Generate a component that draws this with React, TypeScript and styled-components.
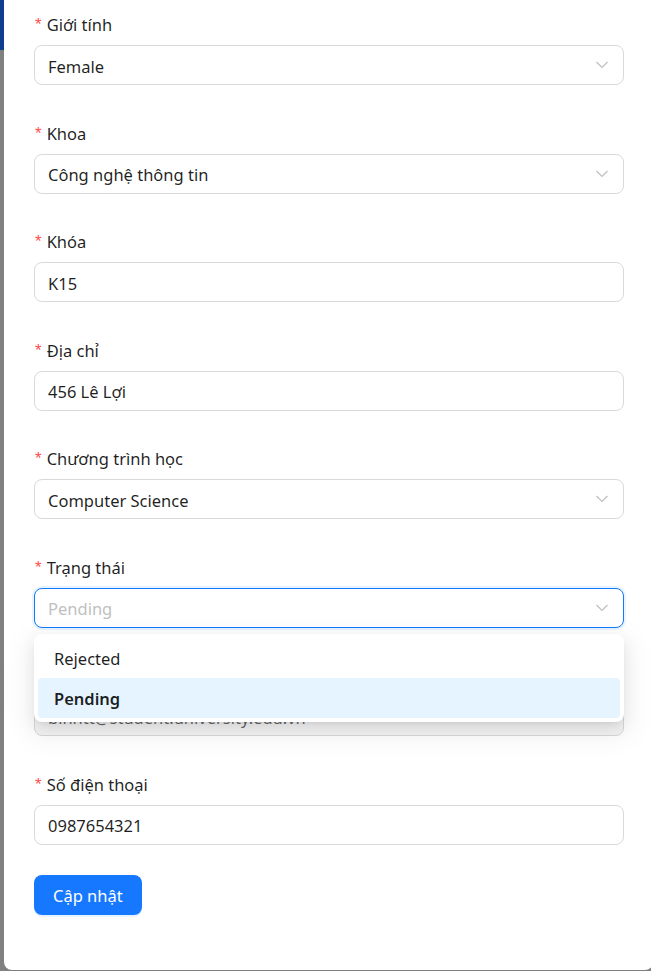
import React from "react";
import styled, { createGlobalStyle } from "styled-components";

const Global = createGlobalStyle`
  html, body { margin: 0; padding: 0; }
  body {
    font-family: "Noto Sans", "Segoe UI", Roboto, sans-serif;
    overflow: hidden;
    background: #808080;
  }
  * { box-sizing: border-box; }
`;

const Page = styled.div`
  width: 651px;
  height: 971px;
  overflow: hidden;
  display: flex;
  align-items: flex-end;
  padding-left: 4px;
  background: linear-gradient(#0e3e8d 0 50px, #808080 50px);
`;

const Modal = styled.div`
  flex: none;
  width: 649px;
  height: 971px;
  background: #fff;
  border-radius: 0 0 8px 8px;
  padding: 14px 28px 0 30px;
  margin-bottom: 1px;
`;

const Item = styled.div`
  margin-bottom: 36.57px;
  position: relative;
`;

const Label = styled.div`
  font-size: 16.5px;
  height: 32px;
  line-height: 24px;
  padding-bottom: 8px;
  color: rgba(0, 0, 0, 0.88);
  display: flex;
  align-items: center;
`;

const Star = styled.span`
  color: #ff4d4f;
  font-family: SimSun, "Liberation Sans", sans-serif;
  font-size: 17px;
  line-height: 24px;
  margin-left: 1px;
  margin-right: 5px;
`;

const Field = styled.div<{ $focused?: boolean; $disabled?: boolean }>`
  width: 590px;
  height: 40px;
  border: 1px solid ${(p) => (p.$focused ? "#1677ff" : "#d9d9d9")};
  border-radius: 8px;
  background: ${(p) => (p.$disabled ? "rgba(0,0,0,0.04)" : "#fff")};
  box-shadow: ${(p) => (p.$focused ? "0 0 0 2px rgba(5,145,255,0.1)" : "none")};
  display: flex;
  align-items: center;
  padding: 2px 14px 0 13px;
  font-size: 16.5px;
  color: ${(p) => (p.$disabled ? "rgba(0,0,0,0.6)" : "rgba(0,0,0,0.88)")};
`;

const Value = styled.span<{ $placeholder?: boolean }>`
  flex: 1;
  color: ${(p) => (p.$placeholder ? "#bfbfbf" : "inherit")};
  white-space: nowrap;
`;

const ChevronSvg = styled.svg`
  flex: none;
  margin-top: -2px;
`;

const Chevron = () => (
  <ChevronSvg width="14" height="14" viewBox="0 0 14 14" fill="none">
    <polyline points="1.5,4 7,9.5 12.5,4" stroke="#bfbfbf" strokeWidth="1.2" />
  </ChevronSvg>
);

const Dropdown = styled.div`
  position: absolute;
  left: 0;
  top: 78px;
  width: 590px;
  padding: 4px;
  background: #fff;
  border-radius: 8px;
  box-shadow: 0 6px 16px 0 rgba(0, 0, 0, 0.08), 0 3px 6px -4px rgba(0, 0, 0, 0.12),
    0 9px 28px 8px rgba(0, 0, 0, 0.05);
  z-index: 10;
`;

const Option = styled.div<{ $selected?: boolean }>`
  height: 40px;
  display: flex;
  align-items: center;
  padding: 2px 16px 0;
  font-size: 16.5px;
  border-radius: 4px;
  color: rgba(0, 0, 0, 0.88);
  font-weight: ${(p) => (p.$selected ? 600 : 400)};
  background: ${(p) => (p.$selected ? "#e6f4ff" : "transparent")};
`;

const Button = styled.button`
  height: 40px;
  padding: 2px 19px 0;
  border: none;
  border-radius: 8px;
  background: #1677ff;
  color: #fff;
  font-family: inherit;
  font-size: 16.5px;
  box-shadow: 0 2px 0 rgba(5, 145, 255, 0.1);
  margin-top: -6.57px;
`;

type F = { label: string; value: string; select?: boolean };

const fields: F[] = [
  { label: "Giới tính", value: "Female", select: true },
  { label: "Khoa", value: "Công nghệ thông tin", select: true },
  { label: "Khóa", value: "K15" },
  { label: "Địa chỉ", value: "456 Lê Lợi" },
  { label: "Chương trình học", value: "Computer Science", select: true },
];

export default function App() {
  return (
    <>
      <Global />
      <Page>
        <Modal>
          {fields.map((f) => (
            <Item key={f.label}>
              <Label>
                <Star>*</Star>
                {f.label}
              </Label>
              <Field>
                <Value>{f.value}</Value>
                {f.select && <Chevron />}
              </Field>
            </Item>
          ))}
          <Item>
            <Label>
              <Star>*</Star>
              Trạng thái
            </Label>
            <Field $focused>
              <Value $placeholder>Pending</Value>
              <Chevron />
            </Field>
            <Dropdown>
              <Option>Rejected</Option>
              <Option $selected>Pending</Option>
            </Dropdown>
          </Item>
          <Item>
            <Label>
              <Star>*</Star>
              Email
            </Label>
            <Field $disabled>
              <Value>binhtt@student.university.edu.vn</Value>
            </Field>
          </Item>
          <Item>
            <Label>
              <Star>*</Star>
              Số điện thoại
            </Label>
            <Field>
              <Value>0987654321</Value>
            </Field>
          </Item>
          <Button>Cập nhật</Button>
        </Modal>
      </Page>
    </>
  );
}
